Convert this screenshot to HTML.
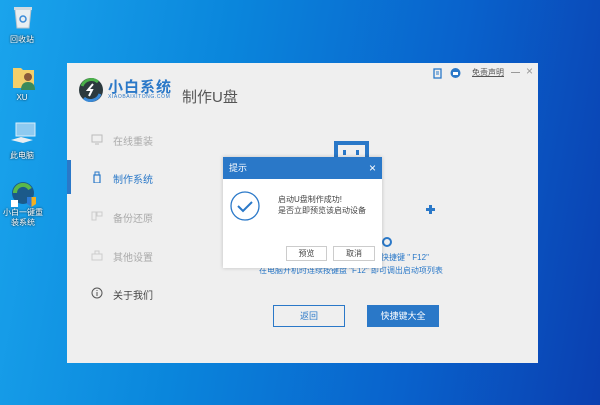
<!DOCTYPE html>
<html><head><meta charset="utf-8"><style>
*{margin:0;padding:0;box-sizing:border-box}
body{width:600px;height:405px;overflow:hidden;position:relative;font-family:"Liberation Sans","Noto Sans CJK SC",sans-serif;
background:linear-gradient(100deg,#1aa4ec 0%,#0a86dc 35%,#0962cc 70%,#0a3fb0 100%);}
.abs{position:absolute}
.dl{position:absolute;color:#fff;font-size:8px;text-align:center;width:40px;text-shadow:0 0 2px #000}
.win{left:67px;top:63px;width:471px;height:300px;background:#efefef}
.menu{position:absolute;left:24px;font-size:10px;color:#aaa}
.menu span{position:absolute;left:22px;top:0;white-space:nowrap}
.ic{position:absolute;left:0;top:0;width:12px;height:12px}
</style></head><body>
<!-- desktop icons -->
<svg class="abs" style="left:12px;top:4px" width="22" height="26"><path d="M3 5h16l-2 19H5z" fill="#e8eef2" stroke="#b8c4cc"/><rect x="2" y="3" width="18" height="3" fill="#d0dae0"/><circle cx="11" cy="15" r="3" fill="none" stroke="#3a8ad8" stroke-width="1.5"/></svg>
<div class="dl" style="left:2px;top:34px">回收站</div>
<svg class="abs" style="left:12px;top:64px" width="24" height="26"><path d="M1 4h8l2 2h11v18H1z" fill="#f3cf6a"/><circle cx="16" cy="13" r="4" fill="#8a5a3a"/><path d="M9 26c0-6 3-8 7-8s7 2 7 8z" fill="#3a8a5a"/></svg>
<div class="dl" style="left:2px;top:93px">XU</div>
<svg class="abs" style="left:10px;top:122px" width="26" height="24"><rect x="6" y="1" width="19" height="13" fill="#8ecaf0" stroke="#d8eefa"/><path d="M1 18l10-3 12 3-10 3z" fill="#e8eef2"/></svg>
<div class="dl" style="left:2px;top:150px">此电脑</div>
<svg class="abs" style="left:9px;top:180px" width="28" height="28"><circle cx="14" cy="13" r="11" fill="#1b5a8a"/><path d="M6 13a8 8 0 0 1 15-4" stroke="#5ab84a" stroke-width="4" fill="none"/><rect x="2" y="20" width="7" height="7" fill="#fff"/><path d="M18 17h9v7l-4.5 3-4.5-3z" fill="#f3b020"/><path d="M18 17h4.5v10l-4.5-3z" fill="#2a7ad8"/></svg>
<div class="dl" style="left:0;top:208px;width:46px;line-height:10px">小白一键重装系统</div>

<div class="abs win">
 <!-- logo -->
 <svg class="abs" style="left:11px;top:14px" width="26" height="26"><circle cx="13" cy="13" r="12" fill="#2c3a3e"/><path d="M4 9a10 10 0 0 1 16-4" stroke="#4ab04a" stroke-width="3" fill="none"/><path d="M22 17a10 10 0 0 1-16 4" stroke="#3a8ad8" stroke-width="3" fill="none"/><path d="M15 7l-5 6h4l-3 6" stroke="#fff" stroke-width="2" fill="none"/></svg>
 <div class="abs" style="left:41px;top:13px;font-size:15px;color:#2a78c8;font-weight:bold;letter-spacing:1px">小白系统</div>
 <div class="abs" style="left:41px;top:31px;font-size:5px;color:#2a78c8;letter-spacing:.6px">XIAOBAIXITONG.COM</div>
 <div class="abs" style="left:115px;top:23px;font-size:15px;color:#555">制作U盘</div>
 <!-- top right -->
 <svg class="abs" style="left:366px;top:5px" width="9" height="11"><rect x="1" y="1" width="7" height="9" fill="none" stroke="#2a78c8" stroke-width="1.3"/><path d="M3 4h3M3 6h3" stroke="#2a78c8"/></svg>
 <svg class="abs" style="left:383px;top:5px" width="11" height="10"><circle cx="5.5" cy="5" r="5" fill="#2a78c8"/><rect x="3" y="4" width="5" height="3" fill="#fff"/></svg>
 <div class="abs" style="left:405px;top:4px;font-size:8px;color:#555;text-decoration:underline">免责声明</div>
 <div class="abs" style="left:444px;top:9px;width:9px;height:1px;background:#999"></div>
 <div class="abs" style="left:459px;top:1px;font-size:12px;color:#999">×</div>
 <!-- sidebar -->
 <div class="abs" style="left:0;top:97px;width:4px;height:34px;background:#2a78c8"></div>
 <div class="menu" style="top:70px"><svg class="ic" width="12" height="12"><rect x="1" y="2" width="10" height="7" fill="none" stroke="#bbb"/><path d="M4 11h4" stroke="#bbb"/></svg><span>在线重装</span></div>
 <div class="menu" style="top:108px;color:#2a78c8"><svg class="ic" width="12" height="12"><rect x="3" y="4" width="6" height="8" fill="none" stroke="#2a78c8" stroke-width="1.2"/><rect x="4" y="1" width="4" height="3" fill="none" stroke="#2a78c8"/></svg><span>制作系统</span></div>
 <div class="menu" style="top:147px"><svg class="ic" width="12" height="12"><rect x="1" y="2" width="4" height="8" fill="none" stroke="#ccc"/><rect x="6" y="2" width="5" height="4" fill="none" stroke="#ccc"/></svg><span>备份还原</span></div>
 <div class="menu" style="top:186px"><svg class="ic" width="12" height="12"><rect x="1" y="5" width="10" height="6" fill="none" stroke="#ccc"/><path d="M4 5V2h4v3" fill="none" stroke="#ccc"/></svg><span>其他设置</span></div>
 <div class="menu" style="top:224px;color:#444"><svg class="ic" width="12" height="12"><circle cx="6" cy="6" r="5" fill="none" stroke="#555"/><path d="M6 5v4M6 3v1" stroke="#555"/></svg><span>关于我们</span></div>
 <!-- content -->
 <svg class="abs" style="left:267px;top:77px" width="36" height="22"><path d="M2 22V3h31v19" fill="none" stroke="#2a78c8" stroke-width="4"/><rect x="9" y="10" width="3" height="5" fill="#2a78c8"/><rect x="22" y="10" width="3" height="5" fill="#2a78c8"/></svg>
 <div class="abs" style="left:359px;top:145px;width:9px;height:3px;background:#2a78c8"></div>
 <div class="abs" style="left:362px;top:142px;width:3px;height:9px;background:#2a78c8"></div>
 <div class="abs" style="left:315px;top:174px;width:10px;height:10px;border:2px solid #2a78c8;border-radius:50%"></div>
 <div class="abs" style="left:306px;top:189px;font-size:8px;color:#2a78c8;white-space:nowrap">动快捷键 " F12"</div>
 <div class="abs" style="left:192px;top:202px;font-size:8px;color:#2a78c8;white-space:nowrap">在电脑开机时连续按键盘 "F12" 即可调出启动项列表</div>
 <div class="abs" style="left:206px;top:242px;width:72px;height:22px;border:1px solid #2a78c8;font-size:9px;color:#2a78c8;text-align:center;line-height:20px">返回</div>
 <div class="abs" style="left:300px;top:242px;width:72px;height:22px;background:#2a78c8;font-size:9px;color:#fff;text-align:center;line-height:22px">快捷键大全</div>
</div>
<!-- dialog -->
<div class="abs" style="left:223px;top:157px;width:159px;height:111px;background:#fff;box-shadow:0 0 4px rgba(0,0,0,.2)">
 <div style="height:22px;background:#2a78c8;color:#fff;font-size:9px;line-height:22px;padding-left:6px;position:relative">提示<span style="position:absolute;right:6px;top:0;font-size:12px">×</span></div>
 <svg class="abs" style="left:7px;top:34px" width="30" height="30"><circle cx="15" cy="15" r="14" fill="none" stroke="#2a78c8" stroke-width="1.3"/><path d="M8 15l5 5 9-9" fill="none" stroke="#2a78c8" stroke-width="2"/></svg>
 <div class="abs" style="left:55px;top:37px;font-size:8px;color:#444;line-height:11px;white-space:nowrap">启动U盘制作成功!<br>是否立即预览该启动设备</div>
 <div class="abs" style="left:63px;top:89px;width:41px;height:15px;border:1px solid #ccc;font-size:8px;color:#444;text-align:center;line-height:13px">预览</div>
 <div class="abs" style="left:110px;top:89px;width:42px;height:15px;border:1px solid #ccc;font-size:8px;color:#444;text-align:center;line-height:13px">取消</div>
</div>
</body></html>
